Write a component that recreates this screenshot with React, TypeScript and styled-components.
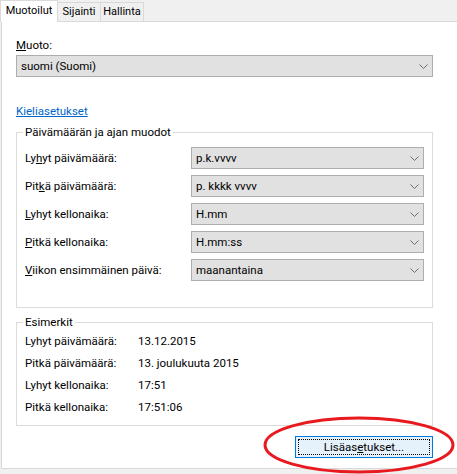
import React from 'react';
import styled, { createGlobalStyle } from 'styled-components';

const GlobalStyle = createGlobalStyle`
    html, body {
        margin: 0;
        padding: 0;
        background: #f0f0f0;
    }
    * {
        box-sizing: border-box;
    }
`;

const Window = styled.div`
    position: relative;
    width: 457px;
    height: 474px;
    overflow: hidden;
    background: #f0f0f0;
    font-family: Roboto, 'Liberation Sans', Arial, sans-serif;
    font-size: 11.5px;
    color: #000;
`;

const TabStrip = styled.div`
    display: flex;
    align-items: flex-end;
    height: 21px;
`;

const Tab = styled.div<{ $active?: boolean; $width: number }>`
    position: relative;
    z-index: 1;
    display: flex;
    align-items: center;
    justify-content: center;
    width: ${(p) => p.$width}px;
    border: 1px solid #d9d9d9;
    border-bottom: none;
    font-size: 11px;
    ${(p) =>
        p.$active
            ? `
        height: 22px;
        margin-bottom: -1px;
        padding-bottom: 2px;
        background: #ffffff;
    `
            : `
        height: 19px;
        padding-bottom: 1px;
        border-left: none;
        background: #f0f0f0;
    `}
`;

const Panel = styled.div`
    margin-left: 1px;
    height: 448px;
    border: 1px solid #d9d9d9;
    border-right: none;
    background: #ffffff;
    padding: 15px 0 0 14px;
`;

const Content = styled.div`
    width: 417px;
`;

const FieldLabel = styled.div`
    line-height: 16px;
    margin-bottom: 2px;
`;

const Key = styled.span`
    text-decoration: underline;
`;

const SelectBox = styled.div<{ $width?: number }>`
    display: flex;
    align-items: center;
    justify-content: space-between;
    width: ${(p) => (p.$width ? `${p.$width}px` : '100%')};
    height: 22px;
    padding: 0 4px 0 4px;
    border: 1px solid #adadad;
    background: #e1e1e1;
    line-height: 16px;
`;

const Link = styled.a`
    display: inline-block;
    margin-top: 26px;
    line-height: 16px;
    color: #0066cc;
    text-decoration: underline;
    cursor: pointer;
`;

const Group = styled.fieldset<{ $top: number; $pad: string }>`
    margin: ${(p) => p.$top}px 0 0 0;
    padding: ${(p) => p.$pad};
    border: 1px solid #dcdcdc;
    min-width: 0;
`;

const Legend = styled.legend`
    padding: 0 2px;
    margin-left: -2px;
    line-height: 16px;
`;

const FormRow = styled.div`
    display: flex;
    align-items: center;
    height: 22px;
    & + & {
        margin-top: 6px;
    }
`;

const RowLabel = styled.div<{ $width: number }>`
    width: ${(p) => p.$width}px;
    flex: none;
`;

const SampleRow = styled.div`
    display: flex;
    align-items: center;
    height: 22px;
`;

const ButtonRow = styled.div`
    display: flex;
    justify-content: flex-end;
    margin-top: 10px;
`;

const Button = styled.button`
    position: relative;
    width: 138px;
    height: 22px;
    padding: 0;
    border: 1px solid #0078d7;
    background: #e5f1fb;
    font: inherit;
    color: #000;
    line-height: 16px;
    &::after {
        content: '';
        position: absolute;
        inset: 2px;
        border: 1px dotted #000;
    }
`;

const Annotation = styled.svg`
    position: absolute;
    left: 262px;
    top: 414px;
    pointer-events: none;
`;

const Chevron = () => (
    <svg width="9" height="5" viewBox="0 0 9 5">
        <path d="M0.5 0.5L4.5 4.5L8.5 0.5" fill="none" stroke="#6d6d6d" strokeWidth="1" />
    </svg>
);

const Select: React.FC<{ value: string; width?: number }> = ({ value, width }) => (
    <SelectBox $width={width}>
        <span>{value}</span>
        <Chevron />
    </SelectBox>
);

const formats = [
    { label: <>Ly<Key>h</Key>yt päivämäärä:</>, value: 'p.k.vvvv' },
    { label: <>Pit<Key>k</Key>ä päivämäärä:</>, value: 'p. kkkk vvvv' },
    { label: <><Key>L</Key>yhyt kellonaika:</>, value: 'H.mm' },
    { label: <><Key>P</Key>itkä kellonaika:</>, value: 'H.mm:ss' },
    { label: <><Key>V</Key>iikon ensimmäinen päivä:</>, value: 'maanantaina' },
];

const samples = [
    ['Lyhyt päivämäärä:', '13.12.2015'],
    ['Pitkä päivämäärä:', '13. joulukuuta 2015'],
    ['Lyhyt kellonaika:', '17:51'],
    ['Pitkä kellonaika:', '17:51:06'],
];

const App: React.FC = () => {
    return (
        <Window>
            <GlobalStyle />
            <TabStrip>
                <Tab $active $width={58}>Muotoilut</Tab>
                <Tab $width={43}>Sijainti</Tab>
                <Tab $width={43}>Hallinta</Tab>
            </TabStrip>
            <Panel>
                <Content>
                    <FieldLabel>
                        <Key>M</Key>uoto:
                    </FieldLabel>
                    <Select value="suomi (Suomi)" />
                    <Link>Kieliasetukset</Link>
                    <Group $top={5} $pad="7px 8px 26px 8px">
                        <Legend>Päivämäärän ja ajan muodot</Legend>
                        {formats.map((f) => (
                            <FormRow key={f.value}>
                                <RowLabel $width={166}>{f.label}</RowLabel>
                                <Select value={f.value} width={233} />
                            </FormRow>
                        ))}
                    </Group>
                    <Group $top={6} $pad="0 8px 7px 8px">
                        <Legend>Esimerkit</Legend>
                        {samples.map(([label, value]) => (
                            <SampleRow key={label}>
                                <RowLabel $width={113}>{label}</RowLabel>
                                <span>{value}</span>
                            </SampleRow>
                        ))}
                    </Group>
                    <ButtonRow>
                        <Button>
                            Lisäas<Key>e</Key>tukset...
                        </Button>
                    </ButtonRow>
                </Content>
            </Panel>
            <Annotation width="196" height="62" viewBox="0 0 196 62">
                <ellipse cx="97" cy="31" rx="94" ry="27" fill="none" stroke="#e8191f" strokeWidth="3" />
            </Annotation>
        </Window>
    );
};

export default App;
